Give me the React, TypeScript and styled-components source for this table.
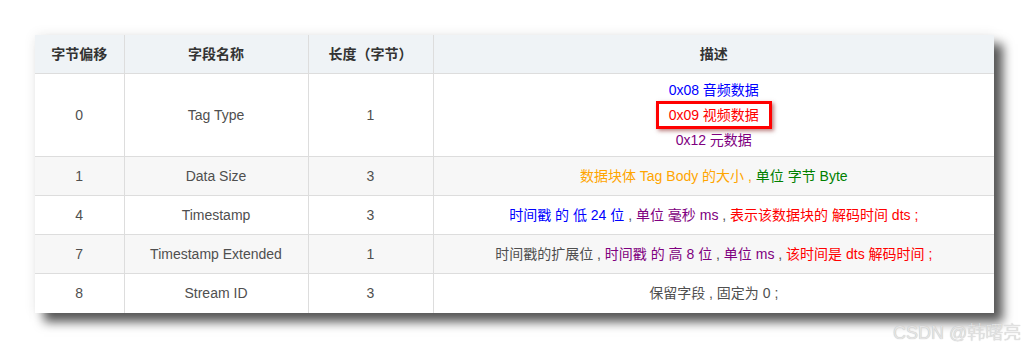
import React from 'react';
import styled, { createGlobalStyle } from 'styled-components';

const GlobalStyle = createGlobalStyle`
  html, body {
    margin: 0;
    padding: 0;
    background: #fff;
  }
  body {
    font-family: "Liberation Sans", "Noto Sans CJK SC", sans-serif;
  }
`;

const Page = styled.div`
  position: relative;
  width: 1029px;
  height: 348px;
  padding: 35px 0 0 35px;
  box-sizing: border-box;
  overflow: hidden;
`;

const Table = styled.table`
  width: 959px;
  border-collapse: collapse;
  table-layout: fixed;
  font-size: 14px;
  color: #4f4f4f;
  box-shadow: 9px 9px 10px rgba(0, 0, 0, 0.65), 0 0 12px rgba(0, 0, 0, 0.08);
`;

const Th = styled.th`
  background: #eff3f6;
  color: #333;
  font-weight: bold;
  height: 38px;
  padding: 0 10px;
  border: 1px solid #dddddd;
  border-top: none;
  line-height: 22px;
  text-align: center;
  &:first-child { border-left: none; }
  &:last-child { border-right: none; }
`;

const Row = styled.tr<{ $striped?: boolean }>`
  background: ${p => (p.$striped ? '#f7f7f7' : '#fff')};
`;

const Td = styled.td<{ $tall?: boolean }>`
  height: ${p => (p.$tall ? '83px' : '39px')};
  padding: 0 10px;
  border: 1px solid #dddddd;
  line-height: 22.5px;
  text-align: center;
  box-sizing: border-box;
  &:first-child { border-left: none; }
  &:last-child { border-right: none; }
  tr:last-child > & { border-bottom: none; }
`;

const Line = styled.div``;

const C = styled.span<{ $c: string }>`
  color: ${p => p.$c};
`;

const Boxed = styled.span`
  display: inline-block;
  color: #ff0000;
  border: 3px solid #ff0000;
  padding: 0 10px;
  line-height: 22px;
  box-shadow: 2px 2px 4px rgba(120, 0, 0, 0.5);
`;

const Watermark = styled.div`
  position: absolute;
  left: 893px;
  top: 318px;
  font-size: 18px;
  font-weight: 300;
  color: #e4e4e4;
  text-shadow: 0 0 1px #b0b0b0;
  white-space: nowrap;
`;

const BLUE = '#0000ff';
const RED = '#ff0000';
const PURPLE = '#800080';
const ORANGE = '#ffa500';
const GREEN = '#008000';

export default function App() {
  return (
    <Page>
      <GlobalStyle />
      <Table>
        <colgroup>
          <col style={{ width: 89 }} />
          <col style={{ width: 184 }} />
          <col style={{ width: 125 }} />
          <col />
        </colgroup>
        <thead>
          <tr>
            <Th>字节偏移</Th>
            <Th>字段名称</Th>
            <Th>长度（字节）</Th>
            <Th>描述</Th>
          </tr>
        </thead>
        <tbody>
          <Row>
            <Td $tall>0</Td>
            <Td $tall>Tag Type</Td>
            <Td $tall>1</Td>
            <Td $tall>
              <Line><C $c={BLUE}>0x08 音频数据</C></Line>
              <Line><Boxed>0x09 视频数据</Boxed></Line>
              <Line><C $c={PURPLE}>0x12 元数据</C></Line>
            </Td>
          </Row>
          <Row $striped>
            <Td>1</Td>
            <Td>Data Size</Td>
            <Td>3</Td>
            <Td>
              <C $c={ORANGE}>数据块体 Tag Body 的大小 , </C>
              <C $c={GREEN}>单位 字节 Byte</C>
            </Td>
          </Row>
          <Row>
            <Td>4</Td>
            <Td>Timestamp</Td>
            <Td>3</Td>
            <Td>
              <C $c={BLUE}>时间戳 的 低 24 位</C> , <C $c={PURPLE}>单位 毫秒 ms</C> ,{' '}
              <C $c={RED}>表示该数据块的 解码时间 dts ;</C>
            </Td>
          </Row>
          <Row $striped>
            <Td>7</Td>
            <Td>Timestamp Extended</Td>
            <Td>1</Td>
            <Td>
              时间戳的扩展位 , <C $c={PURPLE}>时间戳 的 高 8 位</C> ,{' '}
              <C $c={PURPLE}>单位 ms</C> , <C $c={RED}>该时间是 dts 解码时间 ;</C>
            </Td>
          </Row>
          <Row>
            <Td>8</Td>
            <Td>Stream ID</Td>
            <Td>3</Td>
            <Td>保留字段 , 固定为 0 ;</Td>
          </Row>
        </tbody>
      </Table>
      <Watermark>CSDN @韩曙亮</Watermark>
    </Page>
  );
}
